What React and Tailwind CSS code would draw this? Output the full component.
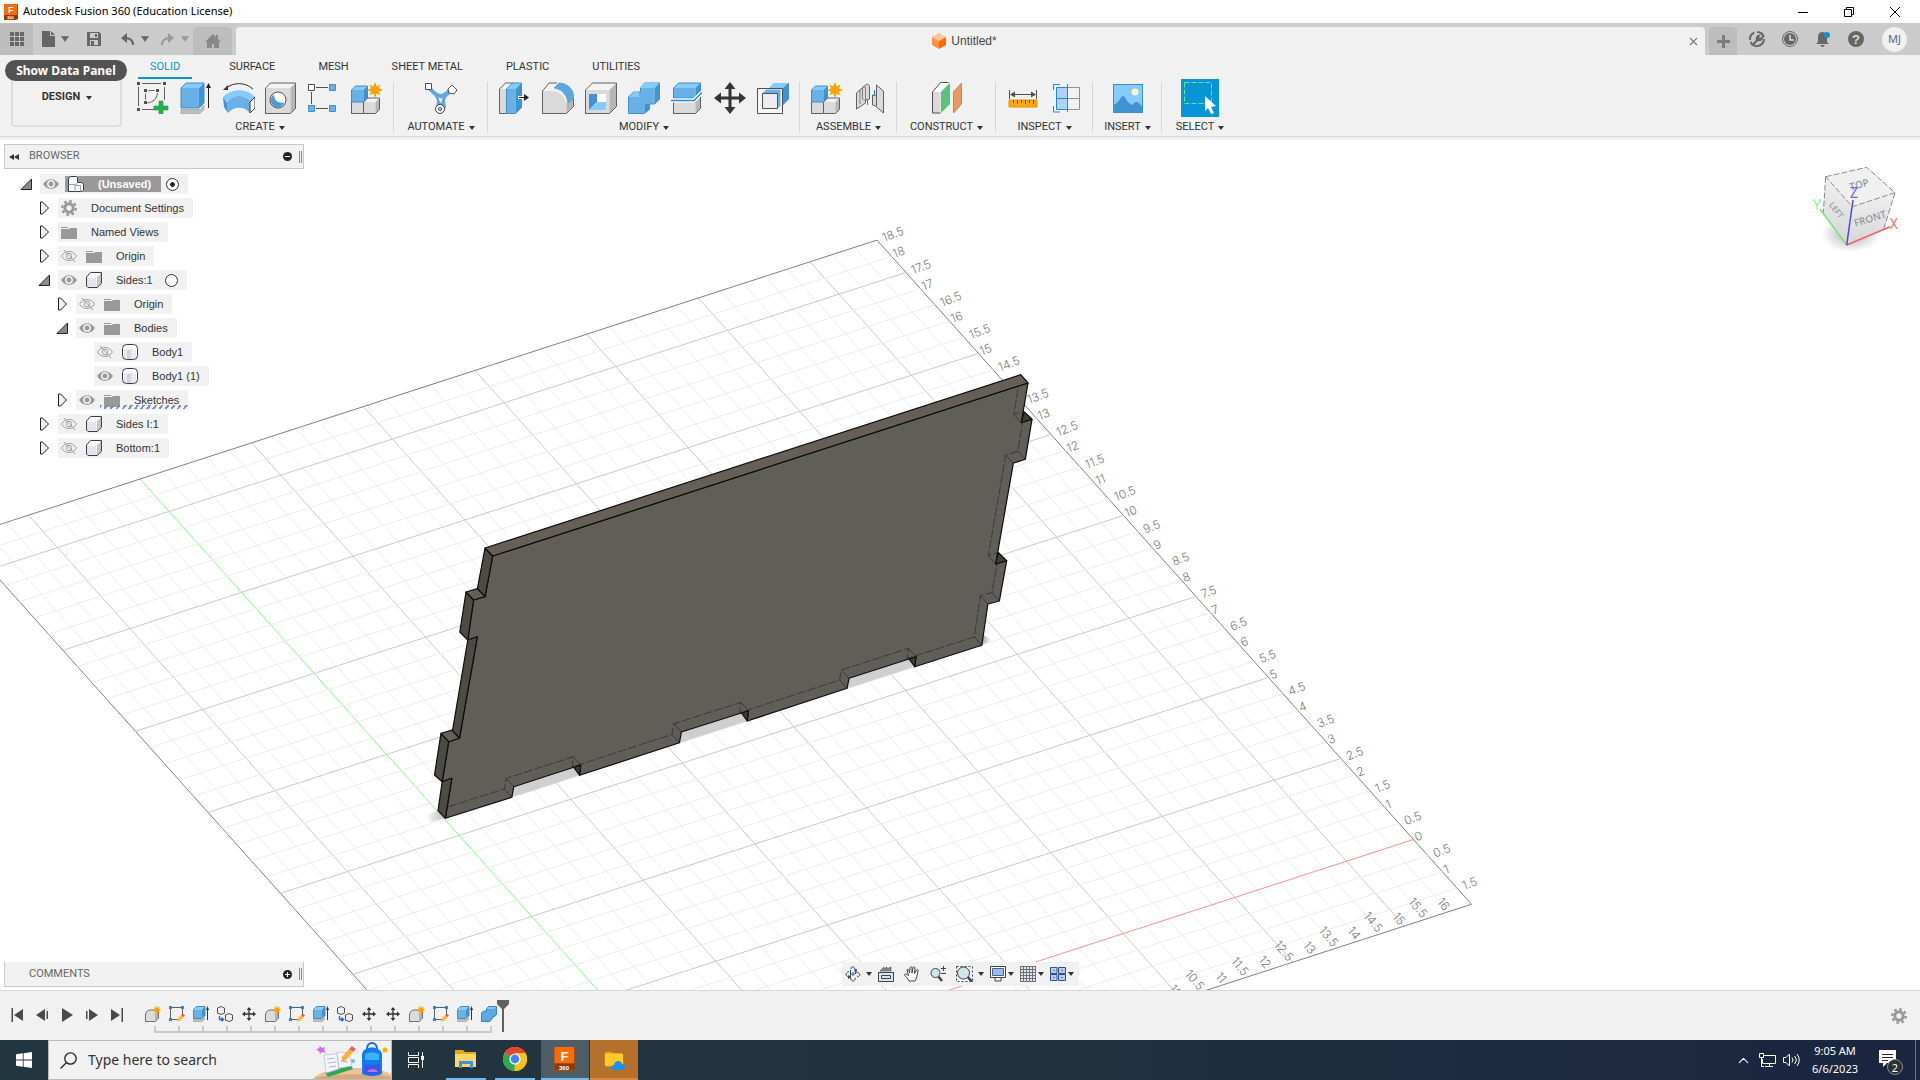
import React from "react";
import { X, Minus, Plus, ChevronUp } from "lucide-react";
import { FcFolder } from "react-icons/fc";

/* ---------- shared bits ---------- */

const Svg = ({ w = 32, h = w, box = `0 0 ${w} ${h}`, children, className = "" }) => (
  <svg width={w} height={h} viewBox={box} fill="none" className={`shrink-0 ${className}`} aria-hidden="true">
    {children}
  </svg>
);

const Caret = ({ big, color = "#333" }) => (
  <Svg w={big ? 8 : 6} h={big ? 6 : 4} box="0 0 6 4">
    <path d="M0 0h6L3 4z" fill={color} />
  </Svg>
);

const Star = ({ x, y, s = 1 }) => (
  <path
    transform={`translate(${x} ${y}) scale(${s})`}
    d="M0-8 1.8-3.6 5.8-5.6 3.8-1.7 8 0 3.8 1.7 5.8 5.6 1.8 3.6 0 8-1.8 3.6-5.8 5.6-3.8 1.7-8 0-3.8-1.7-5.8-5.6-1.8-3.6z"
    fill="#f8a200"
  />
);

const BLUE = { front: "#68b0e6", top: "#86cbff", side: "#4093d0", line: "#3d8fcc" };
const GREY = { front: "#dadada", top: "#f3f3f3", side: "#b6b6b6", line: "#606060" };

// Box with a front face at (x, y) and depth d going up and to the right
const Box = ({ x, y, w, h, d = 5, c = GREY, sw = 1 }) => (
  <g strokeLinejoin="round">
    <path d={`M${x} ${y}h${w}v${h}h${-w}z`} fill={c.front} />
    <path d={`M${x} ${y}l${d} ${-d}h${w}l${-d} ${d}z`} fill={c.top} />
    <path d={`M${x + w} ${y}l${d} ${-d}v${h}l${-d} ${d}z`} fill={c.side} />
    <path d={`M${x} ${y}l${d} ${-d}h${w}v${h}l${-d} ${d}h${-w}z`} stroke={c.line} strokeWidth={sw} />
  </g>
);

/* ---------- ribbon icons ---------- */

const SketchIcon = () => (
  <Svg>
    <g fill="#505050">
      <path d="M0 0h3v3H0zM26 0h3v3h-3zM0 26h3v3H0zM7 7h3v3H7zM19 7h3v3h-3zM7 19h3v3H7z" />
    </g>
    <path d="M5 1.500h19M1.500 5v19M27.500 5v13M5 27.500h13M11.500 8.500h6M8.500 11.500v6" stroke="#606060" />
    <path d="M20.500 11c-1 6-4 9-10 10" stroke="#606060" />
    <path d="M22 19h4v5h5v4h-5v5h-4v-5h-5v-4h5z" fill="#23b14d" stroke="#149a3c" strokeWidth="0.600" />
  </Svg>
);

const ExtrudeIcon = () => (
  <Svg>
    <path d="M1 31.500v-4h19l4-4v4l-4 4z" fill="#bdbdbd" stroke="#999" strokeWidth="0.600" />
    <Box x={1} y={6} w={18} h={20} d={5} c={BLUE} />
    <path d="M28.500 26V5" stroke="#222" />
    <path d="M28.500 1 31 6h-5z" fill="#222" />
  </Svg>
);

const RevolveIcon = () => (
  <Svg>
    <path d="M3 6c8-6 19-6 27 1" stroke="#333" />
    <path d="M0 8l5-5v5z" fill="#333" />
    <path d="M0 15C8 6 24 6 32 15l-4 5C21 12 10 12 4 21z" fill="#86cbff" />
    <path d="M4 21c6-9 17-9 24-1l-1 11C21 24 11 24 5 31z" fill="#68b0e6" />
    <path d="M0 15l4 6 1 10-4-6z" fill="#4093d0" />
    <path d="M27 20l5-5v11l-5 5z" fill="#fff" stroke="#333" />
  </Svg>
);

const HoleIcon = () => (
  <Svg>
    <Box x={0.5} y={6} w={25} h={25.500} d={5} />
    <circle cx="13" cy="18" r="8" fill="#fff" stroke="#505050" />
    <path d="M9 12.500c0 6 4 9 10.500 8A7 7 0 1 1 9 12.500z" fill="#4a9cda" />
  </Svg>
);

const PatternIcon = () => (
  <Svg>
    <path d="M8 5.500h12M8 26.500h12M3.500 10v12" stroke="#505050" />
    <path d="M.5 2.500h6v6h-6z" fill="#fff" stroke="#505050" />
    <path d="M21.500 2.500h6v6h-6zM.5 23.500h6v6h-6zM21.500 23.500h6v6h-6z" fill="#68b0e6" stroke="#3d8fcc" />
  </Svg>
);

const ComponentIcon = () => (
  <Svg>
    <Box x={0.5} y={20} w={12} h={11.500} d={4} />
    <Box x={12.5} y={20} w={12} h={11.500} d={4} />
    <Box x={0.5} y={8} w={12} h={12} d={4} c={BLUE} />
    <Star x={24} y={8} s={1} />
  </Svg>
);

const AutomateIcon = () => (
  <Svg w={34} h={32}>
    <path d="M3 6l4-1c4 4 6 7 10 7 4-1 6-4 10-8l4 4c-5 4-10 7-10 11l1 7H12l1-7C12 13 6 11 3 6z" fill="#5ba8e3" />
    <path d="M14 15c3 1 4 1 5 0 0 3-1 5-2 7-1-2-3-4-3-7z" fill="#f1f1f1" stroke="#4093d0" strokeWidth="0.600" />
    <path d="M1.500 1.500h6v6h-6zM28 3l5 5-3 4-5-1-1-4z" fill="#fff" stroke="#505050" />
    <circle cx="16" cy="27" r="4.500" fill="#fff" stroke="#404040" />
    <circle cx="16" cy="27" r="1.500" stroke="#404040" />
  </Svg>
);

const PressPullIcon = () => (
  <Svg>
    <Box x={0.5} y={7} w={8} h={24.500} d={6} />
    <Box x={7.5} y={7} w={9} h={24.500} d={6} c={BLUE} />
    <path d="M19 15.500h8" stroke="#fff" strokeWidth="3" />
    <path d="M20 15.500h7" stroke="#222" />
    <path d="M25 12l5 3.500-5 3.500z" fill="#222" />
  </Svg>
);

const FilletIcon = () => (
  <Svg>
    <path d="M.5 9l6-8h10l-6 8z" fill="#f3f3f3" />
    <path d="M.5 9h9c8 0 15 7 15 14v8.500H.5z" fill="#dadada" />
    <path d="M24.500 21l7-5v8l-7 7z" fill="#b6b6b6" />
    <path d="M15 1H7L.5 9v22.500h24l7-7V17" stroke="#606060" />
    <path d="M12 6l5-5c9 0 15 7 15 15l-6 5C25 13 20 7 12 6z" fill="#5aa8e2" stroke="#3d8fcc" strokeWidth="0.600" />
  </Svg>
);

const ShellIcon = () => (
  <Svg>
    <Box x={0.5} y={8} w={24} h={23.500} d={7} />
    <path d="M4 12h17v16H4z" fill="#fff" />
    <path d="M4 12h8v8l-8 8z" fill="#4093d0" />
    <path d="M4 28l8-8h9v8z" fill="#86cbff" />
  </Svg>
);

const CombineIcon = () => (
  <Svg>
    <path d="M.5 15l5-5h7V6l4-5h15v16l-5 5h-5v5l-5 4.500H.5z" fill="#68b0e6" stroke="#3d8fcc" />
    <path d="M11 6l5-5h15l-4 5zM1 15l5-5h5v5z" fill="#86cbff" />
    <path d="M27 6l4.500-4.500V17L27 22zM17 26v-4h5v5l-5 4z" fill="#4093d0" />
  </Svg>
);

const SplitIcon = () => (
  <Svg>
    <Box x={2.5} y={20} w={22} h={11.500} d={5} />
    <Box x={2.5} y={6} w={22} h={10} d={5} c={BLUE} />
    <path d="M0 18.500h23l8-8" stroke="#fff" strokeWidth="4" />
    <path d="M0 18.500h23l8-8" stroke="#1e88dc" strokeWidth="1.400" />
  </Svg>
);

const MoveIcon = ({ w = 32 }) => (
  <Svg w={w} box="0 0 32 32">
    <path d="M16 5v22M5 16h22" stroke="#333" strokeWidth="3" />
    <path d="M16 0l5.500 7h-11zM16 32l5.500-7h-11zM0 16l7-5.500v11zM32 16l-7-5.500v11z" fill="#333" />
  </Svg>
);

const ScaleIcon = () => (
  <Svg>
    <path d="M11 7l6-6h15v16l-8 8V7z" fill="#68b0e6" />
    <path d="M11 7l6-6h14l-6 6z" fill="#86cbff" />
    <path d="M32 1v16l-8 8V8z" fill="#4093d0" />
    <path d="M.5 6.500h25v25H.5z" fill="#f7f7f7" stroke="#505050" />
    <path d="M5.500 11l4-3.500h14v16l-3 3z" fill="#68b0e6" />
    <path d="M5.500 11.500h15v15h-15z" fill="#ececec" stroke="#505050" />
  </Svg>
);

const JointIcon = () => (
  <Svg>
    <path d="M2.500 11l9-8c2-2 4 0 4 2v12l-4 1v3l-9 6z" fill="#dadada" stroke="#606060" />
    <path d="M8.500 5v12l3 2V5zM6 8v14" stroke="#808080" />
    <path d="M13.500 17v6" stroke="#1e88dc" />
    <path d="M29.500 9v22l-8-7-3-1V13l4 1V3z" fill="#dadada" stroke="#606060" />
    <path d="M22.500 14v10" stroke="#606060" />
    <path d="M20.500 8v6" stroke="#1e88dc" />
  </Svg>
);

const ConstructIcon = () => (
  <Svg>
    <path d="M1.500 10l8-9h7l-8 9z" fill="#fff" />
    <path d="M1.500 10h8v21.500h-8z" fill="#dadada" />
    <path d="M1.500 31V10l8-9.500h8M1.500 31h8" stroke="#505050" />
    <path d="M10 10l9-9v21l-9 9z" fill="#57c27a" />
    <path d="M22.500 10l8-9v21l-8 9z" fill="#e99a63" stroke="#d98248" />
  </Svg>
);

const MeasureIcon = () => (
  <Svg>
    <path d="M2.500 8v9M29.500 8v9M4 12.500h24" stroke="#505050" />
    <path d="M3 12.500l5-3v6zM29 12.500l-5-3v6z" fill="#505050" />
    <path d="M2 18h28v7H2z" fill="#ffa800" stroke="#e39300" />
    <path d="M6.500 18v3M10.500 18v4M14.500 18v3M18.500 18v4M22.500 18v3M26.500 18v4" stroke="#6b4a00" />
  </Svg>
);

const SectionIcon = () => (
  <Svg>
    <path d="M17 5.500h12.500v22H17M17 16.500h12.500" stroke="#909090" />
    <path d="M6.500 5.500h11v22h-11z" fill="#aed3f0" stroke="#1e88dc" />
    <path d="M6.500 16.500h11M17.500 2v28M3.500 8V2.500H10M3.500 24v6H10" stroke="#1e88dc" />
  </Svg>
);

const ImageIcon = () => (
  <Svg>
    <path d="M1.500 2.500h29v28h-29z" fill="#86cbff" />
    <circle cx="23" cy="10" r="3.500" fill="#fffac6" />
    <path d="M2 23c6-4 7-9 9-9s5 8 9 9c2-2 3-3 5-3s3 3 6 5v6H2z" fill="#4093d0" />
    <path d="M1.500 2.500h29v28h-29z" stroke="#3d8fcc" />
  </Svg>
);

const SelectIcon = () => (
  <Svg w={38} className="bg-[#0696d7]">
    <path d="M3.500 3.500h27v21h-27z" stroke="#6fe09a" strokeDasharray="5 2" />
    <path d="M24 17l11 10-5 1 3 6-3 1-3-6-3 3z" fill="#fff" />
  </Svg>
);

/* ---------- top bars ---------- */

const FusionLogo = ({ w = 16 }) => (
  <Svg w={w} h={w} box="0 0 16 16">
    <path d="M1 1h12l2-1v15l-2 1H1z" fill="#b24402" />
    <path d="M1 0h13v11H1z" fill="#ff6b00" />
    <path d="M1 11h13l1 4H1z" fill="#8e3a06" />
    <text x="5" y="9" fontSize="9" fontWeight="700" fill="#fff" fontFamily="Liberation Sans, sans-serif">F</text>
    <text x="4" y="15" fontSize="4" fontWeight="700" fill="#fff" fontFamily="Liberation Sans, sans-serif">360</text>
  </Svg>
);

const TitleBar = () => (
  <header className="flex h-[23px] shrink-0 items-center bg-white pr-[2px] pl-[3px] text-black">
    <FusionLogo />
    <h1 className="ml-1 flex-1 font-['Noto_Sans',sans-serif] text-[11px]">Autodesk Fusion 360 (Education License)</h1>
    <button aria-label="Minimize" className="grid w-[46px] place-items-center">
      <Svg w={10}><path d="M0 5.500h10" stroke="#000" /></Svg>
    </button>
    <button aria-label="Restore" className="grid w-[46px] place-items-center">
      <Svg w={10}><path d="M.5 2.500h7v7h-7zM2.500 2.500v-2h7v7h-2" stroke="#000" /></Svg>
    </button>
    <button aria-label="Close" className="grid w-[46px] place-items-center">
      <Svg w={10}><path d="M0 0l10 10M10 0L0 10" stroke="#000" /></Svg>
    </button>
  </header>
);

const DocumentBar = () => (
  <div className="flex h-8 shrink-0 bg-[#cbcbcb]">
    <button aria-label="Data panel" className="grid w-[33px] place-items-center bg-[#bdbdbd]">
      <Svg w={14}>
        <path d="M0 0h4v4H0zM5 0h4v4H5zM10 0h4v4h-4zM0 5h4v4H0zM5 5h4v4H5zM10 5h4v4h-4zM0 10h4v4H0zM5 10h4v4H5zM10 10h4v4h-4z" fill="#666" />
      </Svg>
    </button>
    <div className="flex w-40 items-center pl-[9px]">
      <button aria-label="File" className="flex items-center gap-[6px]">
        <Svg w={13} h={16}><path d="M0 0h8v5h5v11H0zM9 0l4 4H9z" fill="#666" /></Svg>
        <Caret big color="#666" />
      </button>
      <button aria-label="Save" className="ml-[18px]">
        <Svg w={14}>
          <path d="M0 0h12l2 2v12H0z" fill="#666" />
          <path d="M3 1h8v5H3zM3 8h8v5H3z" fill="#cbcbcb" />
          <path d="M8 2h2v3H8zM4 9h3v4H4z" fill="#666" />
        </Svg>
      </button>
      <button aria-label="Undo" className="ml-5 flex items-center gap-[7px]">
        <Svg w={13} h={12}>
          <path d="M12 12c0-5-3-7-8-7" stroke="#666" strokeWidth="2" />
          <path d="M6 0v10L0 5z" fill="#666" />
        </Svg>
        <Caret big color="#666" />
      </button>
      <button aria-label="Redo" className="ml-[12px] flex items-center gap-[7px]">
        <Svg w={13} h={12}>
          <path d="M1 12c0-5 3-7 8-7" stroke="#999" strokeWidth="2" />
          <path d="M7 0v10l6-5z" fill="#999" />
        </Svg>
        <Caret big color="#999" />
      </button>
    </div>
    <button aria-label="Home" className="mt-1 grid w-[39px] place-items-center rounded-t bg-[#bdbdbd]">
      <Svg w={16} h={14}>
        <path d="M8 0l3 3V1h2v4l3 3h-2v6H9v-4H7v4H2V8H0z" fill="#888" />
      </Svg>
    </button>
    <div className="mt-1 ml-1 flex flex-1 items-center rounded-t bg-[#f1f1f1] pr-1">
      <div className="flex flex-1 items-center justify-center gap-[5px] pl-2">
        <Svg w={14} h={16}>
          <path d="M7 0l7 4-7 4-7-4z" fill="#ffc29a" />
          <path d="M0 4l7 4v8l-7-4z" fill="#ff9147" />
          <path d="M14 4L7 8v8l7-4z" fill="#ff6b00" />
        </Svg>
        <span className="text-xs text-[#444]">Untitled*</span>
      </div>
      <button aria-label="Close tab" className="grid w-4 place-items-center text-[#777]"><X size={13} /></button>
    </div>
    <button aria-label="New tab" className="mt-1 ml-1 grid w-7 place-items-center rounded-t bg-[#bdbdbd]">
      <Svg w={13}><path d="M5 0h3v5h5v3H8v5H5V8H0V5h5z" fill="#7c7c7c" /></Svg>
    </button>
    <div className="flex w-[183px] items-center pl-3">
      <button aria-label="Extensions" className="mr-[17px]">
        <Svg w={16}>
          <circle cx="8" cy="8" r="7" stroke="#666" strokeWidth="2" strokeDasharray="19 2 9 3 9 2" />
          <path d="M2 14l5-5c-1-4 2-6 5-5l-2 2 1 1 3-2c1 3-2 6-5 5l-5 5z" fill="#666" />
        </Svg>
      </button>
      <button aria-label="Job status" className="mr-[17px]">
        <Svg w={16}>
          <circle cx="8" cy="8" r="7.500" stroke="#666" />
          <circle cx="8" cy="8" r="6" fill="#666" />
          <path d="M8 4v5h4" stroke="#ddd" strokeWidth="1.500" />
        </Svg>
      </button>
      <button aria-label="Notifications" className="mr-[17px]">
        <Svg w={16}>
          <path d="M7 1c4 0 5 3 5 6v4l2 2H1l2-2V7c0-3 1-6 4-6zM5 14h5l-2 2H7z" fill="#666" />
          <circle cx="12" cy="4" r="3" fill="#0696d7" />
        </Svg>
      </button>
      <button aria-label="Help" className="mr-[18px]">
        <Svg w={16}>
          <circle cx="8" cy="8" r="8" fill="#666" />
          <text x="8" y="13" textAnchor="middle" fontSize="13" fontWeight="700" fill="#ddd">?</text>
        </Svg>
      </button>
      <button className="grid size-[25px] place-items-center rounded-full bg-[#f1f1f1] font-['Noto_Sans',sans-serif] text-[11px] text-[#55697c]">
        MJ
      </button>
    </div>
  </div>
);

const TABS = ["SOLID", "SURFACE", "MESH", "SHEET METAL", "PLASTIC", "UTILITIES"];

const GROUPS = [
  { name: "CREATE", width: "w-[262px] pr-[6px]", icons: [SketchIcon, ExtrudeIcon, RevolveIcon, HoleIcon, PatternIcon, ComponentIcon] },
  { name: "AUTOMATE", width: "w-[94px]", icons: [AutomateIcon] },
  { name: "MODIFY", width: "w-[312px]", icons: [PressPullIcon, FilletIcon, ShellIcon, CombineIcon, SplitIcon, MoveIcon, ScaleIcon] },
  { name: "ASSEMBLE", width: "w-[97px]", icons: [ComponentIcon, JointIcon] },
  { name: "CONSTRUCT", width: "w-[99px]", icons: [ConstructIcon] },
  { name: "INSPECT", width: "w-[97px]", icons: [MeasureIcon, SectionIcon] },
  { name: "INSERT", width: "w-[69px]", icons: [ImageIcon] },
  { name: "SELECT", width: "w-[76px]", icons: [SelectIcon] },
];

const Ribbon = () => (
  <div className="relative shrink-0 bg-[#f1f1f1] pb-[3px] font-['Roboto',sans-serif] text-[11px] text-[#333]">
    <div className="flex border-b border-[#dadada]">
      <div className="w-[132px] shrink-0 pt-[21px] pl-[11px]">
        <button className="flex h-[51px] w-[111px] items-center justify-center gap-[6px] rounded border-2 border-[#dedede] pb-2 pl-px font-bold">
          DESIGN <Caret />
        </button>
      </div>
      <div className="min-w-0 flex-1">
        <nav className="flex h-6 gap-[19px] pl-[6px]">
          {TABS.map((tab, i) => (
            <button
              key={tab}
              className={`flex h-6 items-center border-b-2 px-3 pt-[2px] whitespace-nowrap ${
                i === 0 ? "mr-[6px] border-[#0696d7] text-[#0696d7]" : "border-transparent"
              }`}
            >
              {tab}
            </button>
          ))}
        </nav>
        <div className="flex">
          {GROUPS.map(({ name, width, icons }, g) => (
            <section key={name} className={`relative ${width} shrink-0`}>
              {g < GROUPS.length - 1 && <div className="absolute top-[3px] right-0 h-[50px] w-px bg-[#d6d6d6]" />}
              <div className="flex h-[38px] items-center justify-center">
                {icons.map((Icon, i) => (
                  <button key={i} aria-label={`${name} ${i + 1}`} className="grid w-[43px] place-items-center">
                    <Icon />
                  </button>
                ))}
              </div>
              <button className="flex h-[19px] w-full items-center justify-center gap-1 pt-[2px]">
                {name} <Caret />
              </button>
            </section>
          ))}
        </div>
      </div>
    </div>
    <div role="tooltip" className="absolute top-[5px] left-[5px] flex h-[21px] w-[122px] items-center justify-center rounded-full bg-[#525252] font-['Noto_Sans',sans-serif] text-xs font-bold text-white">
      Show Data Panel
    </div>
  </div>
);

/* ---------- browser tree ---------- */

const Eye = ({ off }) => (
  <Svg w={16} h={14}>
    {off ? (
      <g stroke="#a0a0a0">
        <path d="M.5 7C4 1 12 1 15.500 7 12 13 4 13 .5 7z" />
        <circle cx="8" cy="7" r="2.800" />
        <path d="M3 1l11 12" />
      </g>
    ) : (
      <>
        <path d="M0 7C4 .5 12 .5 16 7 12 13.500 4 13.500 0 7z" fill="#9a9a9a" />
        <circle cx="8" cy="7" r="3.200" fill="#9a9a9a" stroke="#f1f1f1" strokeWidth="1.500" />
      </>
    )}
  </Svg>
);

const Folder = () => (
  <Svg w={16} h={13}>
    <path d="M0 1h7v1H0zM0 3h8l1-1h7v11H0z" fill="#999" />
  </Svg>
);

const Gear = ({ w = 16 }) => (
  <Svg w={w} box="0 0 16 16">
    <circle cx="8" cy="8" r="6.800" stroke="#999" strokeWidth="2.400" strokeDasharray="2.700 2.640" />
    <circle cx="8" cy="8" r="4.200" stroke="#999" strokeWidth="3" />
  </Svg>
);

const Part = () => (
  <Svg w={16}>
    <path d="M.5 5l4-4.500h11V11l-4 4.500H2L.5 14z" fill="#fff" />
    <path d="M1 6h9v9H1z" fill="#e3e4e9" />
    <path d="M11 5l4-4v10l-4 4z" fill="#c3c5cd" />
    <path d="M.5 5l4-4.500h11V11l-4 4.500H2L.5 14z" stroke="#3a3d48" strokeLinejoin="round" />
  </Svg>
);

const Body = () => (
  <Svg w={16}>
    <rect x=".5" y=".5" width="15" height="15" rx="4" fill="#fff" />
    <path d="M2 5h12v8l-2 2H4l-2-2z" fill="#e8eaf0" />
    <path d="M5 6h4v9H5z" fill="#d3d6df" />
    <rect x=".5" y=".5" width="15" height="15" rx="4" stroke="#3a3d48" />
  </Svg>
);

const Assembly = () => (
  <Svg w={16}>
    <path d="M.5 3l2-2.500h6l1 1v5h4l2 2V14l-1.500 1.500H.5z" fill="#fff" stroke="#3a3d48" strokeLinejoin="round" />
    <path d="M.5 8.500h6.500v7M7.500 9.500h5v6M7.500 9.500l2-3" stroke="#9a9ca6" />
  </Svg>
);

const Twisty = ({ open }) =>
  open ? (
    <Svg w={12}><path d="M1 11.500L11.500 1v10.500z" fill="#8a8a8a" stroke="#222" /></Svg>
  ) : (
    <Svg w={12} h={14}><path d="M2.500 1h2l6 6-6 6h-2z" fill="#eee" stroke="#222" /></Svg>
  );

const TREE = [
  { label: "(Unsaved)", icon: Assembly, open: true, eye: "on", radio: true, root: true, indent: "pl-[20px]" },
  { label: "Document Settings", icon: Gear, indent: "pl-[38px]" },
  { label: "Named Views", icon: Folder, indent: "pl-[38px]" },
  { label: "Origin", icon: Folder, eye: "off", indent: "pl-[38px]" },
  { label: "Sides:1", icon: Part, open: true, eye: "on", radio: true, indent: "pl-[38px]" },
  { label: "Origin", icon: Folder, eye: "off", indent: "pl-[56px]" },
  { label: "Bodies", icon: Folder, open: true, eye: "on", indent: "pl-[56px]" },
  { label: "Body1", icon: Body, eye: "off", leaf: true, indent: "pl-[74px]" },
  { label: "Body1 (1)", icon: Body, eye: "on", leaf: true, indent: "pl-[74px]" },
  { label: "Sketches", icon: Folder, eye: "on", hatched: true, indent: "pl-[56px]" },
  { label: "Sides I:1", icon: Part, eye: "off", indent: "pl-[38px]" },
  { label: "Bottom:1", icon: Part, eye: "off", indent: "pl-[38px]" },
];

const TreeRow = ({ item }) => {
  const Icon = item.icon;
  return (
    <li className={`flex h-6 items-center ${item.indent}`}>
      <button aria-label="Toggle" className="grid w-5 shrink-0 place-items-center pr-2">
        {!item.leaf && <Twisty open={item.open} />}
      </button>
      <div className="relative flex h-5 items-center bg-[#f1f1f1] pr-[9px] pl-[3px]">
        {item.eye && (
          <button aria-label="Visibility" className={item.root ? "mr-[6px]" : "mr-[9px]"}>
            <Eye off={item.eye === "off"} />
          </button>
        )}
        {item.root ? (
          <span className="flex h-4 items-center gap-[14px] bg-[#999] pr-[10px] pl-[3px] font-bold text-white">
            <Icon /> {item.label}
          </span>
        ) : (
          <span className="flex items-center gap-[14px]">
            <Icon /> {item.label}
          </span>
        )}
        {item.radio && (
          <input
            type="radio"
            name="active-component"
            aria-label={`Activate ${item.label}`}
            defaultChecked={item.root}
            className={`size-[13px] appearance-none rounded-full border border-[#333] bg-white checked:bg-[radial-gradient(circle,#222_26%,#fff_34%)] ${
              item.root ? "ml-[5px]" : "ml-3"
            }`}
          />
        )}
        {item.hatched && (
          <div className="absolute right-0 bottom-px left-6 h-1 bg-[repeating-linear-gradient(125deg,#7f91b4_0px,#7f91b4_2px,transparent_2px,transparent_5px)]" />
        )}
      </div>
    </li>
  );
};

const PanelHeader = ({ title, children, className = "" }) => (
  <div className={`flex h-[25px] w-[300px] items-center border border-[#c8c8c8] bg-[#f1f1f1] pr-px pl-1 text-[11px] text-[#666] ${className}`}>
    <span className="w-5">
      {title === "BROWSER" && (
        <Svg w={10} h={6}><path d="M5 0v6L0 3zM10 0v6L5 3z" fill="#333" /></Svg>
      )}
    </span>
    <h2 className="flex-1 font-['Roboto',sans-serif]">{title}</h2>
    <button aria-label={`${title} options`} className="mr-[7px] grid size-[9px] place-items-center rounded-full bg-[#222] text-white">
      {children}
    </button>
    <div className="h-3 w-[3px] border-x border-[#888]" />
  </div>
);

/* ---------- 3D viewport ---------- */

// Ground plane is a parallel projection: origin plus a screen vector per unit
const ORIGIN = [676.6, 1078.4];
const UX = [44.66, -14.48];
const UY = [-29, -32.4];
const X_RANGE = [-4, 16.5];
const Y_RANGE = [-2, 18.5];

const project = (x, y) => [
  ORIGIN[0] + x * UX[0] + y * UY[0],
  ORIGIN[1] + x * UX[1] + y * UY[1],
];

const range = (from, to) => {
  const out = [];
  for (let v = from; v <= to + 0.001; v += 0.5) out.push(v);
  return out;
};

const gridLine = (a, b, stroke, key) => (
  <line key={key} x1={a[0]} y1={a[1]} x2={b[0]} y2={b[1]} stroke={stroke} />
);

const tone = (v, lo, hi, axis) => {
  if (v === 0) return axis;
  if (v === lo || v === hi) return "#808080";
  return v % 2.5 === 0 ? "#c9c9c9" : "#ececec";
};

const byWeight = (a, b) => (a % 2.5 === 0) - (b % 2.5 === 0);

const Grid = () => (
  <g>
    {range(...X_RANGE).sort(byWeight).map((x) =>
      gridLine(project(x, Y_RANGE[0]), project(x, Y_RANGE[1]), tone(x, ...X_RANGE, "#7dff7d"), `x${x}`)
    )}
    {range(...Y_RANGE).sort(byWeight).map((y) =>
      gridLine(project(X_RANGE[0], y), project(X_RANGE[1], y), tone(y, ...Y_RANGE, "#ff8f8f"), `y${y}`)
    )}
    <g fill="#7c7c7c" fontSize="12" fontWeight="300" fontFamily="Inter, sans-serif">
      {range(-1.5, 18.5).map((y) => {
        const [px, py] = project(X_RANGE[1], y);
        const dx = y % 1 === 0 ? 3 : 7;
        return (
          <text key={y} transform={`translate(${px + dx} ${py + 2}) rotate(-21)`}>{Math.abs(y)}</text>
        );
      })}
      {range(10, 16).map((x) => {
        const [px, py] = project(x, Y_RANGE[0]);
        return (
          <text key={x} textAnchor="end" transform={`translate(${px - 5} ${py}) rotate(50)`}>{x}</text>
        );
      })}
    </g>
  </g>
);

const FRONT_LEFT = "492.7,556 485,596.7 473.6,600 467.8,640 477.4,636.7 459.4,738.3 448.7,741.7 442.2,781.7 451.8,778.3 445.3,818.3";
const FRONT_BOTTOM =
  "511.8,797.3 513.8,786.7 580.7,765 579.6,775.3 679.5,742.7 681.4,732 748.4,710.7 747.2,721 847.1,688.3 849,678.3 916,656.7 914.8,666.7 981.8,645.3";
const FRONT_RIGHT = "987.9,604 999.4,601 1006.7,560.7 995.7,564 1013.3,463.3 1025.3,459.3 1032,419.3 1021.3,422.7 1028,383";

const SIDE_FACES = [
  "485,548 492.7,556 485,596.7 477.4,588.7",
  "466,592 473.6,600 467.8,640 459.8,632",
  "467.8,640 477.4,636.7 459.4,738.3 452.5,730.7",
  "441,733.3 448.7,741.7 442.2,781.7 434.5,775",
  "442.2,781.7 451.8,778.3 445.3,818.3 438,810.7",
];

const TOP_FACES = [
  "485,548 1020.7,374.7 1028,383 492.7,556",
  "466,592 477.4,588.7 485,596.7 473.6,600",
  "441,733.3 452,730 459.4,738.3 448.7,741.7",
];

const NOTCHES = [
  "573.8,767.3 580.7,765 579.6,775.3",
  "741.5,713 748.4,710.7 747.2,721",
  "909,659 916,656.7 914.8,666.7",
  "1021.3,422.7 1032,419.3 1024,411.7",
  "995.7,564 1006.7,560.7 998,552.3",
];

const SHADOWS = [
  "513.8,786.7 573.8,767.3 579.6,775.3 512,797.3",
  "681.4,732 741.5,713 747.2,721 680,742.7",
  "849,678.3 909,659 914.8,666.7 848,688.3",
];

// Every hidden corner gets a short edge running back along the depth vector
const CORNERS = `${FRONT_BOTTOM} ${FRONT_RIGHT}`.split(" ").map((p) => p.split(",").map(Number));

const Plate = () => (
  <g strokeLinejoin="round">
    <defs>
      <linearGradient id="shadow-left" x1="0" x2="1">
        <stop offset="0" stopColor="#bbb" stopOpacity="0" />
        <stop offset="1" stopColor="#bbb" />
      </linearGradient>
      <linearGradient id="shadow-right" x1="0" x2="1">
        <stop offset="0" stopColor="#999" />
        <stop offset="1" stopColor="#bbb" stopOpacity="0" />
      </linearGradient>
      <clipPath id="plate-front">
        <polygon points={`${FRONT_LEFT} ${FRONT_BOTTOM} ${FRONT_RIGHT}`} />
      </clipPath>
    </defs>
    <path d="M425 815l13-4 7 7-14 4z" fill="url(#shadow-left)" />
    <path d="M981 645l2-10 10 5z" fill="url(#shadow-right)" />
    {SHADOWS.map((p) => <polygon key={p} points={p} fill="#cfcfcf" />)}
    <polygon points={`${FRONT_LEFT} ${FRONT_BOTTOM} ${FRONT_RIGHT}`} fill="#605e58" stroke="#0c0c0c" strokeWidth="1.200" />
    <g stroke="#0c0c0c" strokeWidth="1.200">
      {SIDE_FACES.map((p) => <polygon key={p} points={p} fill="#4e4b45" />)}
      {TOP_FACES.map((p) => <polygon key={p} points={p} fill="#655f57" />)}
      {NOTCHES.map((p) => <polygon key={p} points={p} fill="#3f3c35" />)}
    </g>
    <g clipPath="url(#plate-front)" stroke="#2a2926" strokeWidth="0.700">
      <polyline transform="translate(-7.500 -8.300)" points={`445.3,818.3 ${FRONT_BOTTOM} ${FRONT_RIGHT}`} strokeDasharray="9 2" fill="none" />
      {CORNERS.map(([x, y]) => <line key={`${x}-${y}`} x1={x} y1={y} x2={x - 7.5} y2={y - 8.3} />)}
    </g>
  </g>
);

const ViewCube = () => (
  <svg className="absolute top-[10px] right-0" width="120" height="120" viewBox="1800 150 120 120" aria-label="View cube">
    <defs>
      <radialGradient id="cube-shadow">
        <stop offset="0" stopColor="#888" stopOpacity="0.700" />
        <stop offset="1" stopColor="#888" stopOpacity="0" />
      </radialGradient>
      <linearGradient id="cube-side" x1="0" y1="0" x2="0" y2="1">
        <stop offset="0" stopColor="#f0f0f0" />
        <stop offset="1" stopColor="#d6d6d6" />
      </linearGradient>
    </defs>
    <ellipse cx="1851" cy="234" rx="30" ry="18" fill="url(#cube-shadow)" />
    <path d="M1825.700 176.700l41-9.400 28.300 25.400-42.700 14z" fill="#f0f0f0" />
    <path d="M1825.700 176.700l26.600 30-5.600 38.300-23.400-32z" fill="url(#cube-side)" />
    <path d="M1852.300 206.700l42.700-14-11 35.600-37.300 16.700z" fill="url(#cube-side)" />
    <path d="M1825.700 176.700l41-9.400 28.300 25.400-42.700 14zM1825.700 176.700l-2.400 36M1895 192.700l-11 35.600" fill="none" stroke="#8a8a8a" strokeDasharray="6 2" />
    <g fill="#94989d" fontFamily="Open Sans, sans-serif" fontWeight="600" textAnchor="middle">
      <text fontSize="10" transform="translate(1860 188) rotate(-14)">TOP</text>
      <text fontSize="10" transform="translate(1871 222) rotate(-17)">FRONT</text>
      <text fontSize="8" transform="translate(1834 212) rotate(52)">LEFT</text>
    </g>
    <path d="M1846.700 245L1820 209" stroke="#7be07b" strokeWidth="1.500" />
    <path d="M1846.700 245l43.300-18.300" stroke="#f06060" strokeWidth="1.500" />
    <path d="M1846.700 245l6.300-45" stroke="#4a4ae0" strokeWidth="1.500" />
    <g fontFamily="Roboto, sans-serif" fontSize="14" textAnchor="middle">
      <text x="1817" y="210" fill="#90f090">Y</text>
      <text x="1894" y="229" fill="#f88080">X</text>
      <text x="1854" y="198" fill="#6a6af5">Z</text>
    </g>
  </svg>
);

const DARK = "#3a4350";

const OrbitIcon = () => (
  <Svg w={16}>
    <path d="M6 3C6 0 9 0 10 3M5.500 12c1 4 4 4 5 0M10 3l.5 5M5.500 4v8M4 5.500C0 7 0 10 4 11M11 6c5 1 5 4 1 5" stroke={DARK} />
    <path d="M3 9l3 2-3 2zM9 4l3-1-.5 3z" fill={DARK} />
    <path d="M8 6v4M6 8h4" stroke="#1e78d2" strokeWidth="1.200" />
  </Svg>
);

const LookIcon = () => (
  <Svg w={16}>
    <path d="M.5 6.500h15v9H.5zM3.500 9.500h9v3h-9z" fill="#dfe2e6" stroke={DARK} />
    <path d="M2 5l4-4v2l3-2v2l4-2v4z" fill="#8a9099" stroke={DARK} strokeWidth="0.600" />
  </Svg>
);

const HandIcon = () => (
  <Svg w={16}>
    <path
      d="M5 15c-1-3-4-4-4.500-6.500C1.500 7 3 9 4.500 9.500L3 4c1-2 2 0 2.500 3L6 2c1-2 2-1 2 0v5l1-5.500c1-1 2-.5 2 .5l-.5 5.500L12.500 4c1-1 2 0 1.500 1-1 4-1 7-3 10z"
      fill="#fff" stroke={DARK}
    />
  </Svg>
);

const ZoomIcon = () => (
  <Svg w={16}>
    <path d="M8 10l4 5" stroke={DARK} strokeWidth="2.500" />
    <circle cx="5.500" cy="7" r="4.500" fill="#d3e4e8" stroke={DARK} />
    <path d="M13.500 0v5M11 2.500h5M11 7.500h5" stroke={DARK} />
  </Svg>
);

const FitIcon = () => (
  <Svg w={17} h={16}>
    <path d="M.5.5h16v15H.5z" stroke={DARK} strokeDasharray="2 2" />
    <path d="M11 10l5 6" stroke={DARK} strokeWidth="2.500" />
    <circle cx="7.500" cy="7" r="6" fill="#d3e4e8" stroke={DARK} />
  </Svg>
);

const DisplayIcon = () => (
  <Svg w={16}>
    <path d="M.5.5h15v11H.5z" fill="#fff" stroke={DARK} />
    <path d="M2.500 2.500h11v7h-11z" fill="#9bbce8" stroke="#3a66a8" />
    <path d="M5 12v3h6v-3" stroke={DARK} />
  </Svg>
);

const GridIcon = () => (
  <Svg w={16}>
    <path d="M.5.5h15v15H.5z" fill="#e6e8ec" />
    <path d="M.5 0v16M3.500 0v16M6.500 0v16M9.500 0v16M12.500 0v16M15.500 0v16M0 .5h16M0 3.500h16M0 6.500h16M0 9.500h16M0 12.500h16M0 15.500h16" stroke="#6a6f78" />
  </Svg>
);

const ViewsIcon = () => (
  <Svg w={16} h={14}>
    <path d="M.5.5h6.500v6H.5zM8.500.5h7v6h-7zM.5 7.500h6.500v6H.5zM8.500 7.500h7v6h-7z" fill="#b4cdf0" stroke="#33507c" />
    <path d="M3 3h2v1H3zM11 3h2v1h-2zM3 10h2v1H3zM11 10h2v1h-2z" fill="#5f7fae" />
  </Svg>
);

const NAV_TOOLS = [
  { name: "Orbit", icon: OrbitIcon, caret: true, spacing: "gap-[5px]" },
  { name: "Look at", icon: LookIcon, spacing: "pr-1" },
  { name: "Pan", icon: HandIcon, spacing: "pr-1" },
  { name: "Zoom", icon: ZoomIcon, spacing: "pr-1" },
  { name: "Fit", icon: FitIcon, caret: true, spacing: "gap-[5px]" },
  { name: "Display settings", icon: DisplayIcon, caret: true, spacing: "gap-[2px]" },
  { name: "Grid and snaps", icon: GridIcon, caret: true, spacing: "gap-[2px]" },
  { name: "Viewports", icon: ViewsIcon, caret: true, spacing: "gap-[2px]" },
];

const NavBar = () => (
  <div className="flex h-6 w-[237px] items-center gap-[6px] bg-[#f1f1f1] pl-[3px]">
    {NAV_TOOLS.map(({ name, icon: Icon, caret, spacing }) => (
      <button key={name} aria-label={name} className={`flex items-center ${spacing}`}>
        <Icon /> {caret && <Caret />}
      </button>
    ))}
  </div>
);

const Viewport = () => (
  <main className="relative flex flex-1 flex-col justify-between overflow-hidden bg-white">
    <svg className="absolute inset-0 h-full w-full" aria-label="Model view">
      <g transform="translate(0 -140)">
        <Grid />
        <Plate />
      </g>
    </svg>
    <ViewCube />
    <aside className="relative pt-1 pl-1 text-[11px] text-[#333]">
      <PanelHeader title="BROWSER"><Minus size={7} strokeWidth={4} /></PanelHeader>
      <ul className="-ml-1 pt-[3px]">
        {TREE.map((item, i) => <TreeRow key={i} item={item} />)}
      </ul>
    </aside>
    <div className="relative grid grid-cols-[1fr_auto_1fr] pb-[3px]">
      <PanelHeader title="COMMENTS" className="ml-1 border-t-0"><Plus size={7} strokeWidth={4} /></PanelHeader>
      <NavBar />
    </div>
  </main>
);

/* ---------- timeline ---------- */

const FeatureIcon = () => (
  <Svg w={16}>
    <path d="M.5 9c0-3 2-5 5-5h8v8l-3 3.500H.5z" fill="#dcdcdc" stroke="#707070" strokeLinejoin="round" />
    <path d="M10 8l3-3v7l-3 3z" fill="#b0b0b0" />
    <Star x={12} y={4} s={0.55} />
  </Svg>
);

const SketchSmall = () => (
  <Svg w={16}>
    <path d="M3 1.500h9M1.500 3v9M13.500 3v5M3 13.500h6" stroke="#606060" />
    <path d="M0 0h3v3H0zM12 0h3v3h-3zM0 12h3v3H0z" fill="#1e88dc" />
    <path d="M8 16l1-4 3-3 3 2-4 4z" fill="#ffb84a" />
    <path d="M12 9l2-1.500 2 2-1.500 1.500z" fill="#e8505a" />
  </Svg>
);

const ExtrudeSmall = () => (
  <Svg w={16}>
    <path d="M.5 15.500v-2H9l2.500-2v2L9 15.500z" fill="#c4c4c4" stroke="#999" strokeWidth="0.600" />
    <Box x={0.5} y={3.5} w={8.500} h={9} d={3} c={BLUE} />
    <path d="M14.500 14V3" stroke="#333" />
    <path d="M14.500 0l1.500 4h-3z" fill="#333" />
  </Svg>
);

const CopySmall = () => (
  <Svg w={16}>
    <path d="M.5 2q3.500-3 7 0v5q-3.500 3-7 0zM8.500 9q3.500-3 7 0v5q-3.500 3-7 0z" fill="#eee" stroke="#505050" />
    <path d="M2.500 10v3.500H6M4.500 11.500l2 2-2 2" stroke="#1766c0" strokeWidth="1.300" />
  </Svg>
);

const MoveSmall = () => <MoveIcon w={14} />;

const CombineSmall = () => (
  <Svg w={16}>
    <path d="M.5 7l2-2h3V3l2-2.500h8v8l-2.500 2.500h-2v2L9 15.500H.5z" fill="#5ba8e3" stroke="#2f86c8" />
    <path d="M6 3l2-2h7l-2 2z" fill="#86cbff" />
  </Svg>
);

const HISTORY = [
  FeatureIcon, SketchSmall, ExtrudeSmall, CopySmall, MoveSmall,
  FeatureIcon, SketchSmall, ExtrudeSmall, CopySmall, MoveSmall, MoveSmall,
  FeatureIcon, SketchSmall, ExtrudeSmall, CombineSmall,
];

const PLAYBACK = [
  ["Go to start", "M.5 0h1.500v14H.5zM12 1v12L3 7z"],
  ["Step back", "M9 1v12L0 7zM10.500 3H12v8h-1.500z"],
  ["Play", "M1 0v14l11-7z"],
  ["Step forward", "M0 3h1.500v8H0zM3 1v12l9-6z"],
  ["Go to end", "M0 1v12l9-6zM10.500 0H12v14h-1.500z"],
];

// The track under the features starts at the first tick and ends at the last
const trackClass = (i) => {
  if (i === 0) return "ml-[13px] w-[11px]";
  if (i === HISTORY.length - 1) return "w-[15px]";
  return "w-6";
};

const Timeline = () => (
  <section className="flex h-[50px] shrink-0 items-center border-t border-[#d6d6d6] bg-[#f1f1f1] pr-[13px] pl-1">
    {PLAYBACK.map(([name, d]) => (
      <button key={name} aria-label={name} className="grid w-[25px] place-items-center pb-[2px]">
        <Svg w={12} h={14}><path d={d} fill="#4a4a4a" /></Svg>
      </button>
    ))}
    <ol className="ml-3 flex pt-[6px]">
      {HISTORY.map((Icon, i) => (
        <li key={i} className="flex w-6 flex-col">
          <button aria-label={`Feature ${i + 1}`} className="grid h-[18px] w-6 place-items-center"><Icon /></button>
          <div className="mt-[3px] ml-[13px] h-[5px] w-[2px] bg-[#c9c9c9]" />
          <div className={`h-[2px] bg-[#c9c9c9] ${trackClass(i)}`} />
        </li>
      ))}
    </ol>
    <Svg w={12} h={32} className="-ml-1">
      <path d="M0 0h12v4L7 9v23H5V9L0 4z" fill="#606060" />
    </Svg>
    <button aria-label="Timeline settings" className="ml-auto"><Gear w={16} /></button>
  </section>
);

/* ---------- taskbar ---------- */

const SearchArt = () => (
  <Svg w={78} h={38}>
    <path d="M0 38c8-14 70-14 78-4v4z" fill="#e8c29a" />
    <path d="M0 38c10-6 66-6 78-2v2z" fill="#d9a878" />
    <path d="M12 31l26-7 2 4-25 8z" fill="#2fa557" />
    <path d="M11 14l11-1 3-2 11 1 3 13-12 2-4 2-10 3z" fill="#f4f5fb" stroke="#b5b9cc" strokeWidth="0.700" />
    <path d="M24 12l2 17M14 18l8-1M15 22l8-1M16 26l7-1M28 16l7 1M28 20l7 1" stroke="#9fa6c4" strokeWidth="0.800" />
    <path d="M28 21l2-6 6-7 4 3-7 8z" fill="#ffad33" />
    <path d="M36 8l3-3 4 3-3 3z" fill="#f0605a" />
    <path d="M7 5l2 2 3-1-1 3 2 3-4-1-2 2-1-3-3-1 3-2z" fill="#d36bf2" />
    <circle cx="40" cy="20" r="2" fill="#5cc9e8" />
    <circle cx="72" cy="9" r="2.500" fill="#ffb000" />
    <path d="M54 8c0-8 10-8 10 0" stroke="#1070d8" strokeWidth="2" />
    <path d="M49 14c0-10 20-10 20 0v18c0 4-20 4-20 0z" fill="#0f7df0" />
    <path d="M51 22c3 3 13 3 16 0v10c-4 2-12 2-16 0z" fill="#3a55e8" />
    <path d="M52 13c4-2 10-2 14 0v6H52z" fill="#3fb0ff" />
    <path d="M54 31c2-4 9-4 11 0z" fill="#c76cf5" />
  </Svg>
);

const ChromeIcon = () => (
  <Svg w={24} box="0 0 24 24">
    <circle cx="12" cy="12" r="12" fill="#fbc116" />
    <path d="M12 12L1.600 6A12 12 0 0 1 22.400 6z" fill="#ea4335" />
    <path d="M12 12l-.5 12A12 12 0 0 1 1.600 6z" fill="#2da94f" />
    <path d="M12 12L22.400 6H12z" fill="#ea4335" />
    <path d="M17 14.500L11.500 24A12 12 0 0 0 22.400 6H12z" fill="#fbc116" />
    <circle cx="12" cy="12" r="5.600" fill="#fff" />
    <circle cx="12" cy="12" r="4.400" fill="#4285f4" />
  </Svg>
);

const ExplorerIcon = () => (
  <Svg w={22} h={20}>
    <path d="M0 1h8l2 2h11v15H0z" fill="#e8a520" />
    <path d="M0 5h21v13H0z" fill="#ffd766" />
    <path d="M4 19v-7h14v7h-3v-4H7v4z" fill="#3a93dd" />
  </Svg>
);

const CloudFolder = () => (
  <div className="relative">
    <FcFolder size={22} />
    <Svg w={14} h={9} className="absolute right-0 bottom-0">
      <path d="M3 9c-4 0-4-5 0-5 1-5 7-5 8-1 4 0 4 6 0 6z" fill="#1e90e8" />
    </Svg>
  </div>
);

const Taskbar = () => (
  <footer className="flex h-10 shrink-0 items-stretch bg-linear-to-r from-[#22363f] via-[#20323f] to-[#1a2540] font-['Noto_Sans',sans-serif] text-white">
    <button aria-label="Start" className="grid w-12 place-items-center">
      <Svg w={16}>
        <path d="M0 2.300L6.800 1.300v6.300H0zM7.600 1.200L16 0v7.600H7.600zM0 8.400h6.800v6.300L0 13.700zM7.600 8.400H16V16l-8.400-1.200z" fill="#fff" />
      </Svg>
    </button>
    <label className="flex w-[344px] items-center border border-[#bbb] bg-[#f1f1f1] pl-[11px]">
      <Svg w={17}>
        <circle cx="10.500" cy="6.500" r="5.700" stroke="#222" strokeWidth="1.300" />
        <path d="M6.500 10.500L.5 16.500" stroke="#222" strokeWidth="1.300" />
      </Svg>
      <input
        type="text"
        aria-label="Search"
        placeholder="Type here to search"
        className="ml-[11px] w-0 flex-1 bg-transparent text-sm text-[#333] placeholder:text-[#333]"
      />
      <SearchArt />
    </label>
    <button aria-label="Task view" className="grid w-12 place-items-center">
      <Svg w={17} h={16}>
        <path d="M.5 0v3.500h10V0M.5 16v-3.500h10V16M.5 5.500h10v5H.5zM14.500 0v16" stroke="#fff" />
        <path d="M13 4h3v4h-3z" fill="#fff" />
      </Svg>
    </button>
    <div className="flex gap-[9px] px-[6px]">
      <button aria-label="File Explorer" className="grid w-10 place-items-center border-b-2 border-[#76b9ed]"><ExplorerIcon /></button>
      <button aria-label="Chrome" className="grid w-10 place-items-center border-b-2 border-[#76b9ed]"><ChromeIcon /></button>
    </div>
    <div className="flex gap-px">
      <button aria-label="Fusion 360" className="grid w-12 place-items-center border-b-2 border-[#76b9ed] bg-[#4d5e66]"><FusionLogo w={24} /></button>
      <button aria-label="Documents" className="grid w-12 place-items-center border-b-2 border-[#d98a3c] bg-[#b5702c]"><CloudFolder /></button>
    </div>
    <div className="ml-auto flex items-center">
      <button aria-label="Show hidden icons" className="grid w-6 place-items-center"><ChevronUp size={17} strokeWidth={1.5} /></button>
      <button aria-label="Network" className="grid w-6 place-items-center">
        <Svg w={17} h={14}>
          <path d="M5 2.500h11.500v8H3.500V6M10.500 11v2.500M6 13.500h8M.5.5h4v4h-4zM2.500 4v9.500H5" stroke="#fff" />
        </Svg>
      </button>
      <button aria-label="Volume" className="grid w-6 place-items-center">
        <Svg w={17} h={14}>
          <path d="M.5 4.500H3l3.500-3.500v12L3 9.500H.5zM9 4.500q2 2.500 0 5M11.500 3q3.500 4 0 8M14 1q4.500 6 0 12" stroke="#fff" />
        </Svg>
      </button>
      <div className="w-16 text-center text-[11px] leading-[18px]">
        <p>9:05 AM</p>
        <p>6/6/2023</p>
      </div>
      <button aria-label="Action center" className="relative ml-3 h-10 w-9">
        <Svg w={17} h={17} className="mb-1">
          <path d="M0 0h17v13H8l-4 4v-4H0z" fill="#fff" />
          <path d="M3 4.500h11M3 7.500h11M3 10.500h6" stroke="#1b2840" />
        </Svg>
        <span className="absolute top-[19px] left-2 grid size-4 place-items-center rounded-full border border-[#888] bg-[#2b2f36] text-[11px] leading-none">2</span>
      </button>
      <div className="h-full w-[5px] border-l border-[#6b7486]" />
    </div>
  </footer>
);

export default function App() {
  return (
    <div className="flex min-h-screen flex-col bg-[#f1f1f1] font-['Liberation_Sans',Arial,sans-serif] select-none">
      <TitleBar />
      <DocumentBar />
      <Ribbon />
      <Viewport />
      <Timeline />
      <Taskbar />
    </div>
  );
}
